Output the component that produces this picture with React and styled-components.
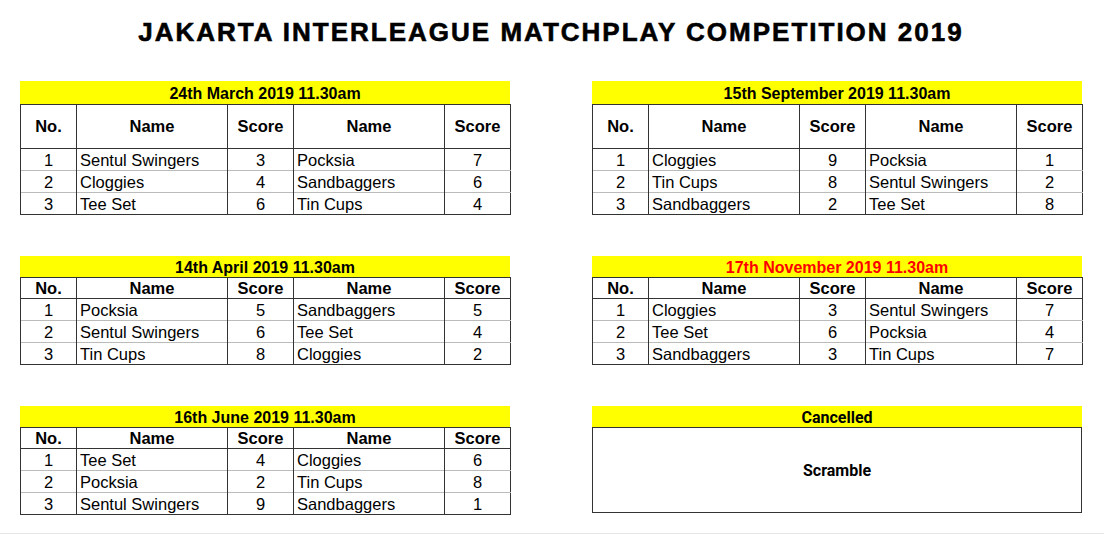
import React from "react";
import styled, { createGlobalStyle } from "styled-components";

const Global = createGlobalStyle`
  html, body { margin: 0; padding: 0; background: #fff; }
  body { font-family: "Liberation Sans", Arial, sans-serif; color: #000; }
`;

const Page = styled.div`
  width: 1104px;
  height: 534px;
  box-sizing: border-box;
  border-bottom: 1px solid #e6e6e6;
  padding: 0 22px 0 20px;
  overflow: hidden;
`;

const Title = styled.h1`
  margin: 0;
  padding-top: 15px;
  height: 81px;
  box-sizing: border-box;
  text-align: center;
  font-size: 26px;
  font-weight: 700;
  letter-spacing: 2px;
  line-height: 34px;
  -webkit-text-stroke: 0.6px #000;
`;

const Grid = styled.div`
  display: grid;
  grid-template-columns: 490px 490px;
  column-gap: 82px;
  row-gap: ${(p) => p.$gap}px;
  align-items: start;
`;

const Block = styled.div`
  display: flex;
  flex-direction: column;
`;

const Banner = styled.div`
  background: #ffff00;
  height: ${(p) => p.$h}px;
  line-height: ${(p) => p.$h + 2}px;
  text-align: center;
  font-weight: 700;
  font-size: 16px;
  color: ${(p) => (p.$red ? "#ff0000" : "#000")};
  font-family: ${(p) => (p.$alt ? "Roboto, 'Liberation Sans', sans-serif" : "inherit")};
`;

const Table = styled.table`
  border-collapse: collapse;
  table-layout: fixed;
  width: 490px;
  font-size: 16.5px;
  border: 1px solid #333;
`;

const Th = styled.th`
  height: ${(p) => p.$h}px;
  padding: 0;
  font-weight: 700;
  font-size: 16.5px;
  text-align: center;
  border-left: 1px solid #333;
  border-bottom: 1px solid #333;
  box-sizing: border-box;
`;

const Td = styled.td`
  height: 21px;
  padding: 0 0 0 ${(p) => (p.$left ? 3 : 0)}px;
  text-align: ${(p) => (p.$left ? "left" : "center")};
  border-left: 1px solid #333;
  border-top: 1px solid #bbb;
  line-height: 20px;
  white-space: nowrap;
  overflow: hidden;
`;

const CancelBox = styled.div`
  height: 86px;
  border: 1px solid #333;
  box-sizing: border-box;
  display: flex;
  align-items: center;
  justify-content: center;
  font-family: Roboto, "Liberation Sans", sans-serif;
  font-weight: 700;
  font-size: 16px;
`;

const data = [
  {
    date: "24th March 2019 11.30am",
    bannerH: 23,
    headH: 44,
    rows: [
      ["Sentul Swingers", 3, "Pocksia", 7],
      ["Cloggies", 4, "Sandbaggers", 6],
      ["Tee Set", 6, "Tin Cups", 4],
    ],
  },
  {
    date: "15th September 2019 11.30am",
    bannerH: 23,
    headH: 44,
    rows: [
      ["Cloggies", 9, "Pocksia", 1],
      ["Tin Cups", 8, "Sentul Swingers", 2],
      ["Sandbaggers", 2, "Tee Set", 8],
    ],
  },
  {
    date: "14th April 2019 11.30am",
    bannerH: 21,
    headH: 21,
    rows: [
      ["Pocksia", 5, "Sandbaggers", 5],
      ["Sentul Swingers", 6, "Tee Set", 4],
      ["Tin Cups", 8, "Cloggies", 2],
    ],
  },
  {
    date: "17th November 2019 11.30am",
    red: true,
    bannerH: 21,
    headH: 21,
    rows: [
      ["Cloggies", 3, "Sentul Swingers", 7],
      ["Tee Set", 6, "Pocksia", 4],
      ["Sandbaggers", 3, "Tin Cups", 7],
    ],
  },
  {
    date: "16th June 2019 11.30am",
    bannerH: 21,
    headH: 21,
    rows: [
      ["Tee Set", 4, "Cloggies", 6],
      ["Pocksia", 2, "Tin Cups", 8],
      ["Sentul Swingers", 9, "Sandbaggers", 1],
    ],
  },
];

function Match({ m }) {
  return (
    <Block>
      <Banner $h={m.bannerH} $red={m.red}>{m.date}</Banner>
      <Table>
        <colgroup>
          <col style={{ width: 56 }} />
          <col style={{ width: 151 }} />
          <col style={{ width: 66 }} />
          <col style={{ width: 151 }} />
          <col style={{ width: 66 }} />
        </colgroup>
        <thead>
          <tr>
            <Th $h={m.headH}>No.</Th>
            <Th $h={m.headH}>Name</Th>
            <Th $h={m.headH}>Score</Th>
            <Th $h={m.headH}>Name</Th>
            <Th $h={m.headH}>Score</Th>
          </tr>
        </thead>
        <tbody>
          {m.rows.map((r, i) => (
            <tr key={i}>
              <Td>{i + 1}</Td>
              <Td $left>{r[0]}</Td>
              <Td>{r[1]}</Td>
              <Td $left>{r[2]}</Td>
              <Td>{r[3]}</Td>
            </tr>
          ))}
        </tbody>
      </Table>
    </Block>
  );
}

export default function App() {
  return (
    <>
      <Global />
      <Page>
        <Title>JAKARTA INTERLEAGUE MATCHPLAY COMPETITION 2019</Title>
        <Grid $gap={41}>
          <Match m={data[0]} />
          <Match m={data[1]} />
          <Match m={data[2]} />
          <Match m={data[3]} />
          <Match m={data[4]} />
          <Block>
            <Banner $h={21} $alt>Cancelled</Banner>
            <CancelBox>Scramble</CancelBox>
          </Block>
        </Grid>
      </Page>
    </>
  );
}
